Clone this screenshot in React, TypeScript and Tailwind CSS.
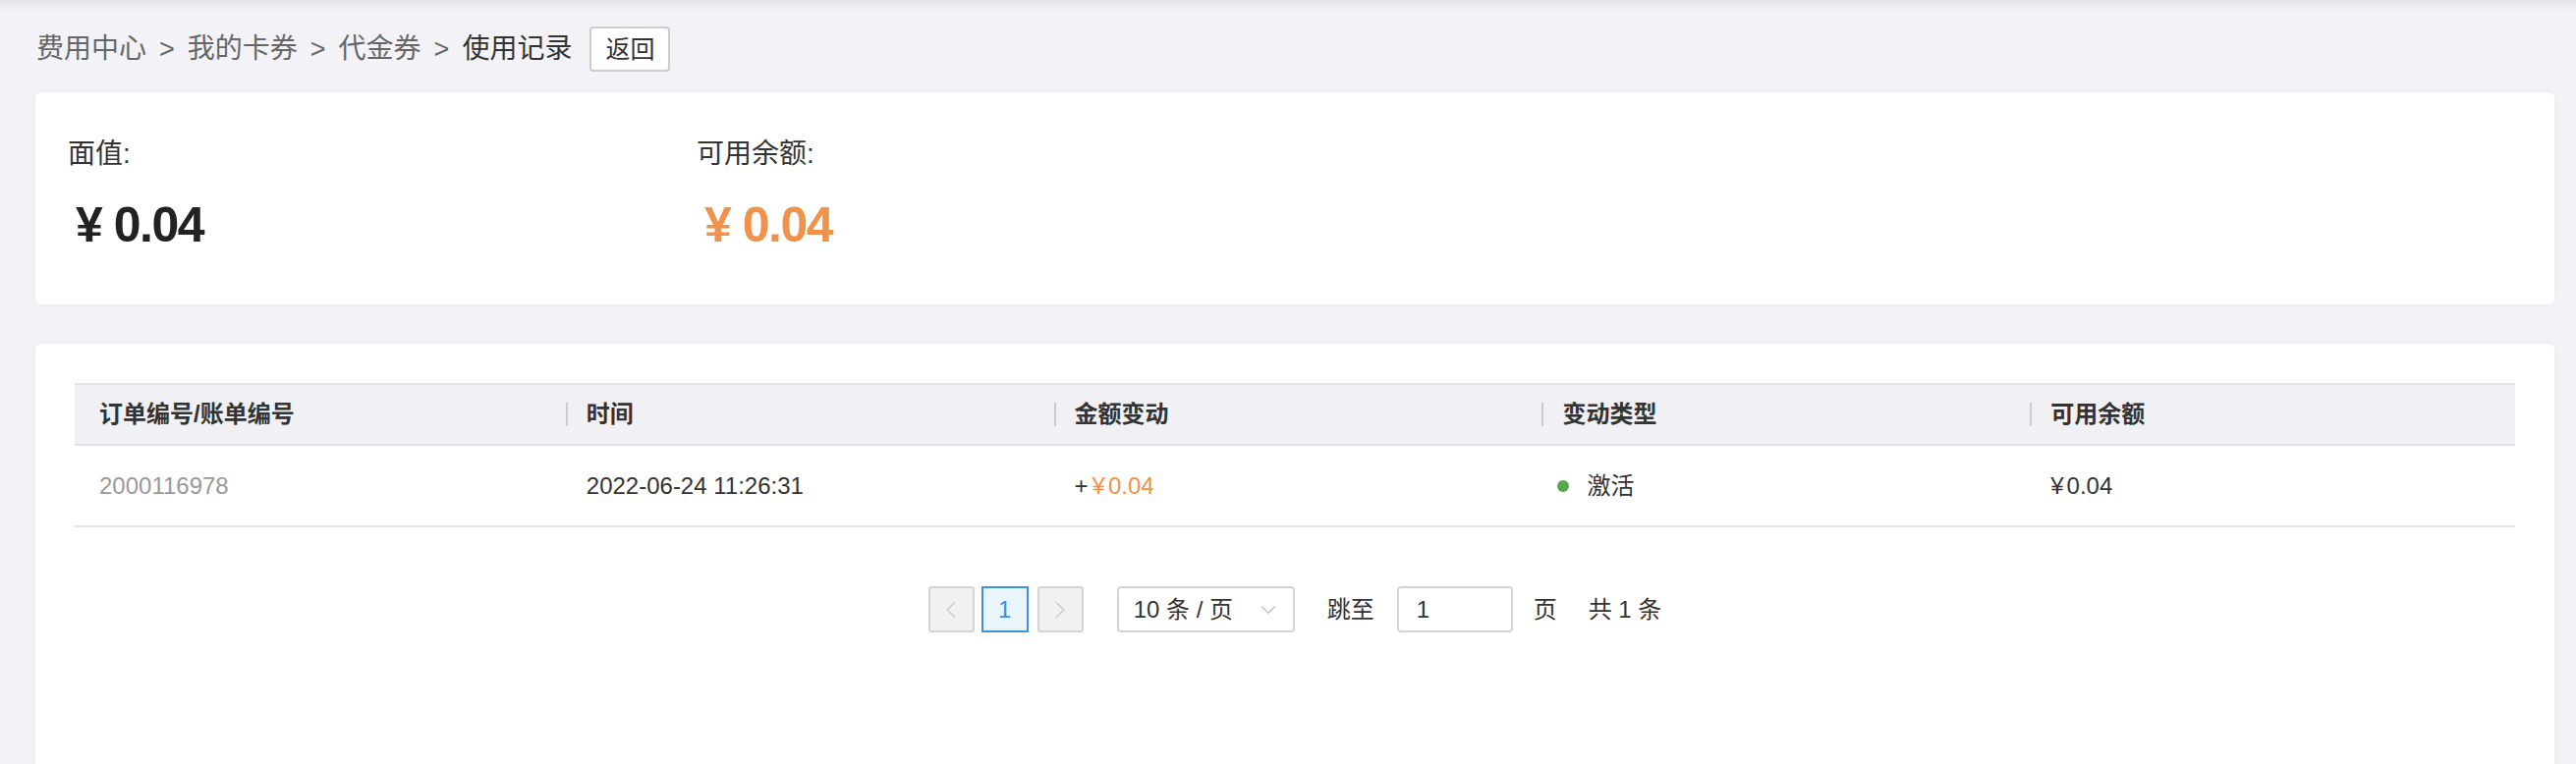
import { ChevronLeft, ChevronRight, ChevronDown } from "lucide-react";

const font = "font-['Liberation_Sans','Noto_Sans_CJK_SC',sans-serif]";

const columns = ["订单编号/账单编号", "时间", "金额变动", "变动类型", "可用余额"];

function Crumbs() {
  const items = ["费用中心", "我的卡券", "代金券"];
  return (
    <div className="flex items-center h-[50px] pl-[1px]">
      <div className="flex items-center text-[28px] leading-[30px] text-[#666]">
        {items.map((item) => (
          <span key={item} className="flex items-center">
            <span>{item}</span>
            <span className="mx-[13px] text-[27px]">&gt;</span>
          </span>
        ))}
        <span className="text-[#333]">使用记录</span>
      </div>
      <button className="ml-[18px] w-[82px] h-[46px] bg-white border-2 border-[#ccc] rounded-[4px] text-[25px] text-[#333] leading-none">
        返回
      </button>
    </div>
  );
}

function Summary() {
  return (
    <div className="mt-[19px] h-[216px] bg-white rounded-[6px] shadow-[0_0_12px_rgba(0,0,0,0.03)] pt-[48px] pl-[33px] flex">
      <div className="w-[640px]">
        <p className="text-[28px] leading-[30px] text-[#333]">面值:</p>
        <p className="mt-[29px] pl-[8px] text-[50px] leading-[56px] font-bold tracking-[-1.5px] text-[#222]">
          ¥ 0.04
        </p>
      </div>
      <div>
        <p className="text-[28px] leading-[30px] text-[#333]">可用余额:</p>
        <p className="mt-[29px] pl-[8px] text-[50px] leading-[56px] font-bold tracking-[-1.5px] text-[#f0924a]">
          ¥ 0.04
        </p>
      </div>
    </div>
  );
}

function Cell({ first, children }: { first?: boolean; children: React.ReactNode }) {
  return (
    <div className="flex items-center pl-[3px]">
      <div className={first ? "pl-[22px] flex items-center" : "pl-[21px] flex items-center"}>
        {children}
      </div>
    </div>
  );
}

function Records() {
  return (
    <div className="mt-[40px] bg-white rounded-[6px] shadow-[0_0_12px_rgba(0,0,0,0.03)] px-[40px] pt-[40px] pb-[160px]">
      <div className="grid grid-cols-5 h-[64px] bg-[#f0f0f5] border-y-2 border-[#e3e3e7]">
        {columns.map((col, i) => (
          <div key={col} className="flex items-center pl-[3px]">
            {i === 0 ? (
              <span className="pl-[22px] text-[24px] font-bold text-[#333]">{col}</span>
            ) : (
              <span className="flex items-center h-[24px] border-l-2 border-[#ccc] pl-[19px] text-[24px] font-bold text-[#333]">
                {col}
              </span>
            )}
          </div>
        ))}
      </div>
      <div className="grid grid-cols-5 h-[83px] border-b-2 border-[#e5e5e5] text-[24px]">
        <Cell first>
          <span className="text-[#999]">2000116978</span>
        </Cell>
        <Cell>
          <span className="text-[#333]">2022-06-24 11:26:31</span>
        </Cell>
        <Cell>
          <span className="text-[#333]">+</span>
          <span className="ml-[4px] text-[#f0924a]">¥</span>
          <span className="ml-[3px] text-[#f0924a]">0.04</span>
        </Cell>
        <div className="flex items-center pl-[19px]">
          <span className="w-[12px] h-[12px] rounded-full bg-[#5aa64f]" />
          <span className="ml-[18px] text-[#333]">激活</span>
        </div>
        <Cell>
          <span className="text-[#333]">¥</span>
          <span className="ml-[3px] text-[#333]">0.04</span>
        </Cell>
      </div>

      <div className="mt-[60px] flex items-center justify-center text-[24px] text-[#333]">
        <button className="w-[47px] h-[47px] flex items-center justify-center bg-[#f1f1f1] border-2 border-[#d4d4d4] rounded-[3px]">
          <ChevronLeft className="w-[30px] h-[30px] text-[#c8c8c8]" strokeWidth={1} />
        </button>
        <button className="ml-[7px] w-[48px] h-[47px] flex items-center justify-center bg-[#e8f5fd] border-2 border-[#3f8fe0] text-[#3f8fe0]">
          1
        </button>
        <button className="ml-[9px] w-[47px] h-[47px] flex items-center justify-center bg-[#f1f1f1] border-2 border-[#d4d4d4] rounded-[3px]">
          <ChevronRight className="w-[30px] h-[30px] text-[#c8c8c8]" strokeWidth={1} />
        </button>
        <div className="ml-[34px] w-[181px] h-[47px] flex items-center justify-between pl-[15px] pr-[12px] border-2 border-[#d4d4d4] rounded-[4px]">
          <span>10 条 / 页</span>
          <ChevronDown className="w-[26px] h-[26px] text-[#bbb]" strokeWidth={1} />
        </div>
        <span className="ml-[33px]">跳至</span>
        <div className="ml-[23px] w-[118px] h-[47px] flex items-center pl-[18px] border-2 border-[#d4d4d4] rounded-[4px]">
          1
        </div>
        <span className="ml-[21px]">页</span>
        <span className="ml-[32px]">共 1 条</span>
      </div>
    </div>
  );
}

export default function App() {
  return (
    <div className={`${font} relative min-h-[778px] bg-[#f3f3f7] overflow-hidden`}>
      {/* header shadow */}
      <div className="absolute top-0 inset-x-0 h-[10px] bg-gradient-to-b from-[#e4e4e8] to-transparent" />
      <div className="pl-[36px] pr-[22px] pt-[25px]">
        <Crumbs />
        <Summary />
        <Records />
      </div>
    </div>
  );
}
